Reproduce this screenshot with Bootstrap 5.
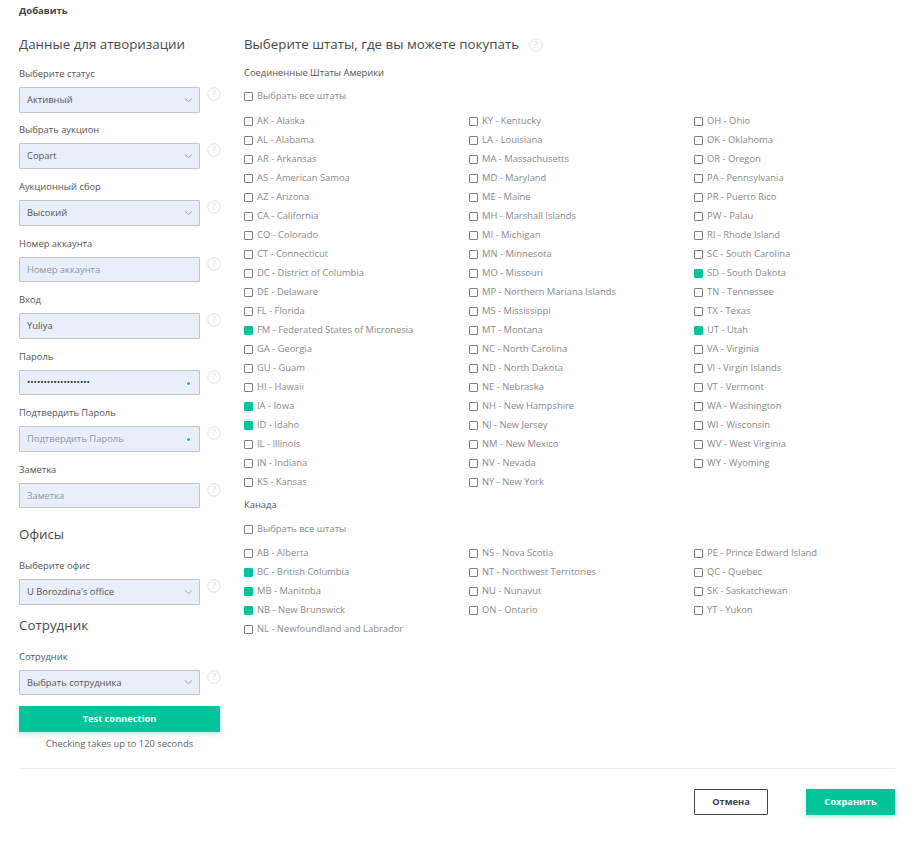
<!DOCTYPE html>
<html lang="ru">
<head>
<meta charset="utf-8">
<title>Добавить</title>
<link href="https://cdn.jsdelivr.net/npm/bootstrap@5.3.0/dist/css/bootstrap.min.css" rel="stylesheet">
<style>
body{font-family:"Open Sans","Liberation Sans",sans-serif;font-size:10px;color:#555;background:#fff;margin:0}
.pg{padding:0 19px;width:914px;height:852px;overflow:hidden}
.ttl{font-size:9.5px;font-weight:700;color:#444;line-height:13px;padding-top:4px;margin:0}
.lay{margin-top:17px}
.lft{width:201px;flex:none}
.rgt{margin-left:24px;flex:1 1 auto}
.hd{font-size:13.35px;font-weight:400;color:#4a4a4a;line-height:20px;margin:0}
.hdo{margin-top:5px}
.fld{height:56.5px}
.fd1{height:56px}
.fd2{height:57px}
.fof{height:55.5px}
.lbl{display:block;font-size:9.4px;line-height:13px;color:#555;margin:0 0 7px}
.fst{margin-top:13px}
.fs2{margin-top:15px}
.inw{width:181px;flex:none}
.inp.form-control,.inp.form-select{height:25.5px;min-height:0;width:181px;border:1px solid #c4c4c4;border-radius:1px;background-color:#e8eefa;font-size:9.4px;color:#555;padding:0 7px;box-shadow:none;line-height:23px}
.inp.form-select{background-image:url("data:image/svg+xml,%3Csvg xmlns='http://www.w3.org/2000/svg' viewBox='0 0 10 6'%3E%3Cpath fill='none' stroke='%23999' d='M1 1l4 4 4-4'/%3E%3C/svg%3E");background-size:9px 6px;background-position:right 6px center;padding-right:20px}
.inp::placeholder{color:#8f96a3;opacity:1}
.inp.pwd{font-size:8.8px;color:#333}
.dotg{width:3px;height:3px;background:#00c49a;border-radius:50%;right:10px;top:12px;box-shadow:0 0 0 1px #fff}
.hlp{width:14px;height:14px;flex:none;margin:0 0 0 7px;display:block}
.hlp2{margin:0 0 0 10px;vertical-align:-3px;display:inline-block}
.tst{width:201px;height:26px;margin-top:11px;background:#00c49a;border:0;border-radius:1px;color:#fff;font-size:9.3px;font-weight:700;padding:0;box-shadow:0 2px 5px rgba(0,196,154,.3);display:block}
.tst:hover{background:#00c49a;color:#fff}
.nte{width:201px;text-align:center;font-size:9.4px;line-height:13px;color:#666;margin:5px 0 0}
.sub{font-size:9.4px;line-height:13px;color:#555;margin:0}
.sub.usa{margin-top:12px}
.sub.canh{margin-top:6px}
.chk{display:flex;align-items:center;height:19px;color:#8a8a8a;font-size:9.4px;margin:0;white-space:nowrap}
.chk input.form-check-input{width:9px;height:9px;margin:0 4px 0 0;border:1px solid #808080;border-radius:1px;background:#fff;flex:none;box-shadow:none}
.chk input.form-check-input:checked{background:#00c49a;border-color:#00c49a;background-image:none}
.cl3{width:225px;flex:none}
.allp{margin-top:8px;margin-bottom:6px}
.all2{margin-top:9px;margin-bottom:5px}
.hrl{border-top:1px solid #eee;margin:18px 0 0;width:876px;opacity:1;color:#eee}
.act{width:876px;margin-top:20px}
.can{width:74px;height:26px;border:1px solid #444;border-radius:1px;background:#fff;color:#444;font-size:9.3px;font-weight:700;padding:0}
.sav{width:89px;height:26px;margin-left:38px;border:0;border-radius:1px;background:#00c49a;color:#fff;font-size:9.3px;font-weight:700;padding:0;box-shadow:0 2px 5px rgba(0,196,154,.3)}
.can:hover{background:#fff;color:#444}.sav:hover{background:#00c49a;color:#fff}
</style>
</head>
<body>
<svg width="0" height="0" class="position-absolute"><defs><g id="q"><circle cx="7" cy="7" r="6.2" fill="none" stroke="#e2e2e2" stroke-width="1"/><text x="7" y="10.2" text-anchor="middle" font-size="9" font-family="Open Sans,sans-serif" fill="#dcdcdc">?</text></g></defs></svg>
<div class="pg">
<p class="ttl">Добавить</p>
<div class="d-flex lay">
<div class="lft">
<h5 class="hd">Данные для атворизации</h5>
<div class="fd1 fst"><label class="lbl">Выберите статус</label><div class="d-flex"><select class="form-select inp inw"><option>Активный</option></select><svg class="hlp" viewBox="0 0 14 14"><use href="#q"/></svg></div></div>
<div class="fd2"><label class="lbl">Выбрать аукцион</label><div class="d-flex"><select class="form-select inp inw"><option>Copart</option></select><svg class="hlp" viewBox="0 0 14 14"><use href="#q"/></svg></div></div>
<div class="fld"><label class="lbl">Аукционный сбор</label><div class="d-flex"><select class="form-select inp inw"><option>Высокий</option></select><svg class="hlp" viewBox="0 0 14 14"><use href="#q"/></svg></div></div>
<div class="fld"><label class="lbl">Номер аккаунта</label><div class="d-flex"><input class="form-control inp inw" placeholder="Номер аккаунта"><svg class="hlp" viewBox="0 0 14 14"><use href="#q"/></svg></div></div>
<div class="fld"><label class="lbl">Вход</label><div class="d-flex"><input class="form-control inp inw" value="Yuliya"><svg class="hlp" viewBox="0 0 14 14"><use href="#q"/></svg></div></div>
<div class="fld"><label class="lbl">Пароль</label><div class="d-flex"><div class="position-relative inw"><input type="password" class="form-control inp pwd" value="abcdefghijklmnopqrs"><span class="dotg position-absolute"></span></div><svg class="hlp" viewBox="0 0 14 14"><use href="#q"/></svg></div></div>
<div class="fld"><label class="lbl">Подтвердить Пароль</label><div class="d-flex"><div class="position-relative inw"><input class="form-control inp" placeholder="Подтвердить Пароль"><span class="dotg position-absolute"></span></div><svg class="hlp" viewBox="0 0 14 14"><use href="#q"/></svg></div></div>
<div class="fld"><label class="lbl">Заметка</label><div class="d-flex"><input class="form-control inp inw" placeholder="Заметка"><svg class="hlp" viewBox="0 0 14 14"><use href="#q"/></svg></div></div>
<h5 class="hd hdo">Офисы</h5>
<div class="fof fs2"><label class="lbl">Выберите офис</label><div class="d-flex"><select class="form-select inp inw"><option>U Borozdina's office</option></select><svg class="hlp" viewBox="0 0 14 14"><use href="#q"/></svg></div></div>
<h5 class="hd">Сотрудник</h5>
<div class="fs2"><label class="lbl">Сотрудник</label><div class="d-flex"><select class="form-select inp inw"><option>Выбрать сотрудника</option></select><svg class="hlp" viewBox="0 0 14 14"><use href="#q"/></svg></div></div>
<button class="btn tst" type="button">Test connection</button>
<p class="nte">Checking takes up to 120 seconds</p>
</div>
<div class="rgt">
<h5 class="hd">Выберите штаты, где вы можете покупать<svg class="hlp hlp2" viewBox="0 0 14 14"><use href="#q"/></svg></h5>
<p class="sub usa">Соединенные Штаты Америки</p>
<label class="chk allp"><input class="form-check-input" type="checkbox">Выбрать все штаты</label>
<div class="d-flex">
<div class="cl3">
<label class="chk"><input class="form-check-input" type="checkbox">AK - Alaska</label>
<label class="chk"><input class="form-check-input" type="checkbox">AL - Alabama</label>
<label class="chk"><input class="form-check-input" type="checkbox">AR - Arkansas</label>
<label class="chk"><input class="form-check-input" type="checkbox">AS - American Samoa</label>
<label class="chk"><input class="form-check-input" type="checkbox">AZ - Arizona</label>
<label class="chk"><input class="form-check-input" type="checkbox">CA - California</label>
<label class="chk"><input class="form-check-input" type="checkbox">CO - Colorado</label>
<label class="chk"><input class="form-check-input" type="checkbox">CT - Connecticut</label>
<label class="chk"><input class="form-check-input" type="checkbox">DC - District of Columbia</label>
<label class="chk"><input class="form-check-input" type="checkbox">DE - Delaware</label>
<label class="chk"><input class="form-check-input" type="checkbox">FL - Florida</label>
<label class="chk"><input class="form-check-input" type="checkbox" checked>FM - Federated States of Micronesia</label>
<label class="chk"><input class="form-check-input" type="checkbox">GA - Georgia</label>
<label class="chk"><input class="form-check-input" type="checkbox">GU - Guam</label>
<label class="chk"><input class="form-check-input" type="checkbox">HI - Hawaii</label>
<label class="chk"><input class="form-check-input" type="checkbox" checked>IA - Iowa</label>
<label class="chk"><input class="form-check-input" type="checkbox" checked>ID - Idaho</label>
<label class="chk"><input class="form-check-input" type="checkbox">IL - Illinois</label>
<label class="chk"><input class="form-check-input" type="checkbox">IN - Indiana</label>
<label class="chk"><input class="form-check-input" type="checkbox">KS - Kansas</label>
</div>
<div class="cl3">
<label class="chk"><input class="form-check-input" type="checkbox">KY - Kentucky</label>
<label class="chk"><input class="form-check-input" type="checkbox">LA - Louisiana</label>
<label class="chk"><input class="form-check-input" type="checkbox">MA - Massachusetts</label>
<label class="chk"><input class="form-check-input" type="checkbox">MD - Maryland</label>
<label class="chk"><input class="form-check-input" type="checkbox">ME - Maine</label>
<label class="chk"><input class="form-check-input" type="checkbox">MH - Marshall Islands</label>
<label class="chk"><input class="form-check-input" type="checkbox">MI - Michigan</label>
<label class="chk"><input class="form-check-input" type="checkbox">MN - Minnesota</label>
<label class="chk"><input class="form-check-input" type="checkbox">MO - Missouri</label>
<label class="chk"><input class="form-check-input" type="checkbox">MP - Northern Mariana Islands</label>
<label class="chk"><input class="form-check-input" type="checkbox">MS - Mississippi</label>
<label class="chk"><input class="form-check-input" type="checkbox">MT - Montana</label>
<label class="chk"><input class="form-check-input" type="checkbox">NC - North Carolina</label>
<label class="chk"><input class="form-check-input" type="checkbox">ND - North Dakota</label>
<label class="chk"><input class="form-check-input" type="checkbox">NE - Nebraska</label>
<label class="chk"><input class="form-check-input" type="checkbox">NH - New Hampshire</label>
<label class="chk"><input class="form-check-input" type="checkbox">NJ - New Jersey</label>
<label class="chk"><input class="form-check-input" type="checkbox">NM - New Mexico</label>
<label class="chk"><input class="form-check-input" type="checkbox">NV - Nevada</label>
<label class="chk"><input class="form-check-input" type="checkbox">NY - New York</label>
</div>
<div class="cl3">
<label class="chk"><input class="form-check-input" type="checkbox">OH - Ohio</label>
<label class="chk"><input class="form-check-input" type="checkbox">OK - Oklahoma</label>
<label class="chk"><input class="form-check-input" type="checkbox">OR - Oregon</label>
<label class="chk"><input class="form-check-input" type="checkbox">PA - Pennsylvania</label>
<label class="chk"><input class="form-check-input" type="checkbox">PR - Puerto Rico</label>
<label class="chk"><input class="form-check-input" type="checkbox">PW - Palau</label>
<label class="chk"><input class="form-check-input" type="checkbox">RI - Rhode Island</label>
<label class="chk"><input class="form-check-input" type="checkbox">SC - South Carolina</label>
<label class="chk"><input class="form-check-input" type="checkbox" checked>SD - South Dakota</label>
<label class="chk"><input class="form-check-input" type="checkbox">TN - Tennessee</label>
<label class="chk"><input class="form-check-input" type="checkbox">TX - Texas</label>
<label class="chk"><input class="form-check-input" type="checkbox" checked>UT - Utah</label>
<label class="chk"><input class="form-check-input" type="checkbox">VA - Virginia</label>
<label class="chk"><input class="form-check-input" type="checkbox">VI - Virgin Islands</label>
<label class="chk"><input class="form-check-input" type="checkbox">VT - Vermont</label>
<label class="chk"><input class="form-check-input" type="checkbox">WA - Washington</label>
<label class="chk"><input class="form-check-input" type="checkbox">WI - Wisconsin</label>
<label class="chk"><input class="form-check-input" type="checkbox">WV - West Virginia</label>
<label class="chk"><input class="form-check-input" type="checkbox">WY - Wyoming</label>
</div>
</div>
<p class="sub canh">Канада</p>
<label class="chk all2"><input class="form-check-input" type="checkbox">Выбрать все штаты</label>
<div class="d-flex">
<div class="cl3">
<label class="chk"><input class="form-check-input" type="checkbox">AB - Alberta</label>
<label class="chk"><input class="form-check-input" type="checkbox" checked>BC - British Columbia</label>
<label class="chk"><input class="form-check-input" type="checkbox" checked>MB - Manitoba</label>
<label class="chk"><input class="form-check-input" type="checkbox" checked>NB - New Brunswick</label>
<label class="chk"><input class="form-check-input" type="checkbox">NL - Newfoundland and Labrador</label>
</div>
<div class="cl3">
<label class="chk"><input class="form-check-input" type="checkbox">NS - Nova Scotia</label>
<label class="chk"><input class="form-check-input" type="checkbox">NT - Northwest Territories</label>
<label class="chk"><input class="form-check-input" type="checkbox">NU - Nunavut</label>
<label class="chk"><input class="form-check-input" type="checkbox">ON - Ontario</label>
</div>
<div class="cl3">
<label class="chk"><input class="form-check-input" type="checkbox">PE - Prince Edward Island</label>
<label class="chk"><input class="form-check-input" type="checkbox">QC - Quebec</label>
<label class="chk"><input class="form-check-input" type="checkbox">SK - Saskatchewan</label>
<label class="chk"><input class="form-check-input" type="checkbox">YT - Yukon</label>
</div>
</div>
</div>
</div>
<hr class="hrl">
<div class="d-flex justify-content-end act">
<button class="btn can" type="button">Отмена</button>
<button class="btn sav" type="button">Сохранить</button>
</div>
</div>
</body>
</html>
